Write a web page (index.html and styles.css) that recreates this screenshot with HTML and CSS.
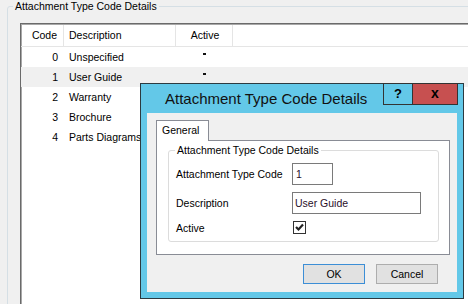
FILE: index.html
```html
<!DOCTYPE html>
<html lang="en">
<head>
    <meta charset="UTF-8">
    <title>Attachment Type Code Details</title>
    <link rel="stylesheet" href="styles.css">
</head>
<body>
<div class="screen">

    <!-- Background form: code list -->
    <fieldset class="group outer">
        <legend>Attachment Type Code Details</legend>
        <div class="list">
            <div class="list-head">
                <div class="cell code">Code</div>
                <div class="cell desc">Description</div>
                <div class="cell active">Active</div>
                <div class="cell filler"></div>
            </div>
            <div class="list-row">
                <div class="cell code">0</div>
                <div class="cell desc">Unspecified</div>
                <div class="cell active"><span class="dot"></span></div>
            </div>
            <div class="list-row selected">
                <div class="cell code">1</div>
                <div class="cell desc">User Guide</div>
                <div class="cell active"><span class="dot"></span></div>
            </div>
            <div class="list-row">
                <div class="cell code">2</div>
                <div class="cell desc">Warranty</div>
                <div class="cell active"></div>
            </div>
            <div class="list-row">
                <div class="cell code">3</div>
                <div class="cell desc">Brochure</div>
                <div class="cell active"></div>
            </div>
            <div class="list-row">
                <div class="cell code">4</div>
                <div class="cell desc">Parts Diagrams</div>
                <div class="cell active"></div>
            </div>
        </div>
    </fieldset>

    <!-- Dialog window -->
    <div class="dialog">
        <div class="titlebar">
            <div class="title">Attachment Type Code Details</div>
            <div class="caption-buttons">
                <div class="cap-btn help">?</div>
                <div class="cap-btn close">x</div>
            </div>
        </div>
        <div class="client">
            <div class="tabs">
                <div class="tab">General</div>
            </div>
            <div class="tab-page">
                <fieldset class="group inner">
                    <legend>Attachment Type Code Details</legend>
                    <div class="form">
                        <label>Attachment Type Code</label>
                        <div class="textbox short">1</div>
                        <label>Description</label>
                        <div class="textbox long">User Guide</div>
                        <label>Active</label>
                        <div class="checkbox">
                            <svg width="11" height="11" viewBox="0 0 11 11">
                                <polyline points="2,5 4.5,7.5 9,2.5" fill="none" stroke="#222" stroke-width="2.2"/>
                            </svg>
                        </div>
                    </div>
                </fieldset>
            </div>
            <div class="buttons">
                <button class="btn default">OK</button>
                <button class="btn">Cancel</button>
            </div>
        </div>
    </div>

</div>
</body>
</html>
```

FILE: styles.css
```css
/* General */
* {
    box-sizing: border-box;
}
body {
    margin: 0;
    background: #f0f0f0;
    font-family: "Liberation Sans", Arial, sans-serif;
    font-size: 10.5px;
    color: #000;
}
.screen {
    position: relative;
    width: 468px;
    height: 304px;
    overflow: hidden;
}

/* Group boxes */
.group {
    margin: 0;
    padding: 0;
    min-width: 0;
    border: 1px solid #d5dfe5;
    border-radius: 3px;
}
.group legend {
    padding: 0 2px;
    line-height: 13px;
}
.outer {
    margin-left: 7px;
    width: 500px;
    height: 400px;
}
.outer legend {
    margin-left: 5px;
}

/* List view */
.list {
    margin: 10px 0 0 12px;
    width: 520px;
    height: 400px;
    background: #fff;
    border: 1px solid #6a6a6a;
    box-shadow: inset 1px 1px 0 #a8a8a8;
}
.list-head,
.list-row {
    display: grid;
    grid-template-columns: 43px 112px 57px 1fr;
}
.list-head {
    height: 23px;
    border-bottom: 1px solid #e5e5e5;
    padding-top: 1px;
}
.list-head .cell {
    border-right: 1px solid #e5e5e5;
    line-height: 21px;
}
.list-row {
    height: 20px;
    line-height: 20px;
}
.list-row.selected {
    background: #f0f0f0;
}
.cell.code {
    text-align: right;
    padding-right: 6px;
}
.cell.desc {
    padding-left: 5px;
    white-space: nowrap;
}
.cell.active {
    display: flex;
    justify-content: center;
}
.list-head .cell.active {
    padding-left: 2px;
}
.dot {
    width: 3px;
    height: 2px;
    margin-top: 6px;
    background: #111;
}

/* Dialog */
.dialog {
    position: absolute;
    left: 140px;
    top: 83px;
    width: 324px;
    height: 216px;
    background: #63c8e8;
    border: 1px solid #2c3a40;
    display: flex;
    flex-direction: column;
}
.titlebar {
    height: 29px;
    display: flex;
}
.title {
    flex: 1;
    padding-left: 24px;
    font-size: 15px;
    line-height: 29px;
    color: #111;
}
.caption-buttons {
    display: flex;
    margin: -1px 5px 0 0;
    height: 22px;
    font-weight: bold;
}
.cap-btn {
    border: 1px solid #333;
    display: flex;
    align-items: center;
    justify-content: center;
}
.help {
    width: 29px;
    border-right: none;
    font-size: 13px;
    padding-bottom: 2px;
}
.close {
    width: 46px;
    background: #c75050;
    font-size: 14px;
    padding-bottom: 3px;
}

.client {
    flex: 1;
    margin: 0 6px 6px 6px;
    background: #f0f0f0;
    padding: 7px 7px 0 9px;
}

/* Tabs */
.tabs {
    display: flex;
    height: 20px;
}
.tab {
    width: 53px;
    background: #fff;
    border: 1px solid #898c95;
    border-bottom: none;
    padding-left: 5px;
    line-height: 19px;
    position: relative;
    z-index: 1;
    height: 21px;
}
.tab-page {
    height: 115px;
    background: #fff;
    border: 1px solid #898c95;
    padding: 3px 10px 0 11px;
}
.inner legend {
    margin-left: 6px;
}
.inner {
    height: 98px;
    border-color: #dcdcdc;
}

/* Form */
.form {
    display: grid;
    grid-template-columns: 116px auto;
    grid-template-rows: 22px 22px 13px;
    row-gap: 7px;
    padding: 6px 0 0 7px;
    align-items: center;
}
.textbox {
    height: 22px;
    border: 1px solid #7a7a7a;
    background: #fff;
    padding-left: 3px;
    line-height: 20px;
    color: #2a0f2a;
}
.textbox.short {
    width: 41px;
}
.textbox.long {
    width: 129px;
    padding-left: 2px;
}
.checkbox {
    width: 13px;
    height: 13px;
    margin-left: 1px;
    border: 1px solid #333;
    background: #fff;
}
.checkbox svg {
    display: block;
}

/* Buttons */
.buttons {
    display: flex;
    justify-content: flex-end;
    gap: 11px;
    padding: 9px 12px 0 0;
}
.btn {
    width: 62px;
    height: 20px;
    padding: 0;
    background: #e1e1e1;
    border: 1px solid #adadad;
    font-family: "Liberation Sans", Arial, sans-serif;
    font-size: 10.5px;
    color: #000;
}
.btn.default {
    border-color: #3c8ed6;
}
```
